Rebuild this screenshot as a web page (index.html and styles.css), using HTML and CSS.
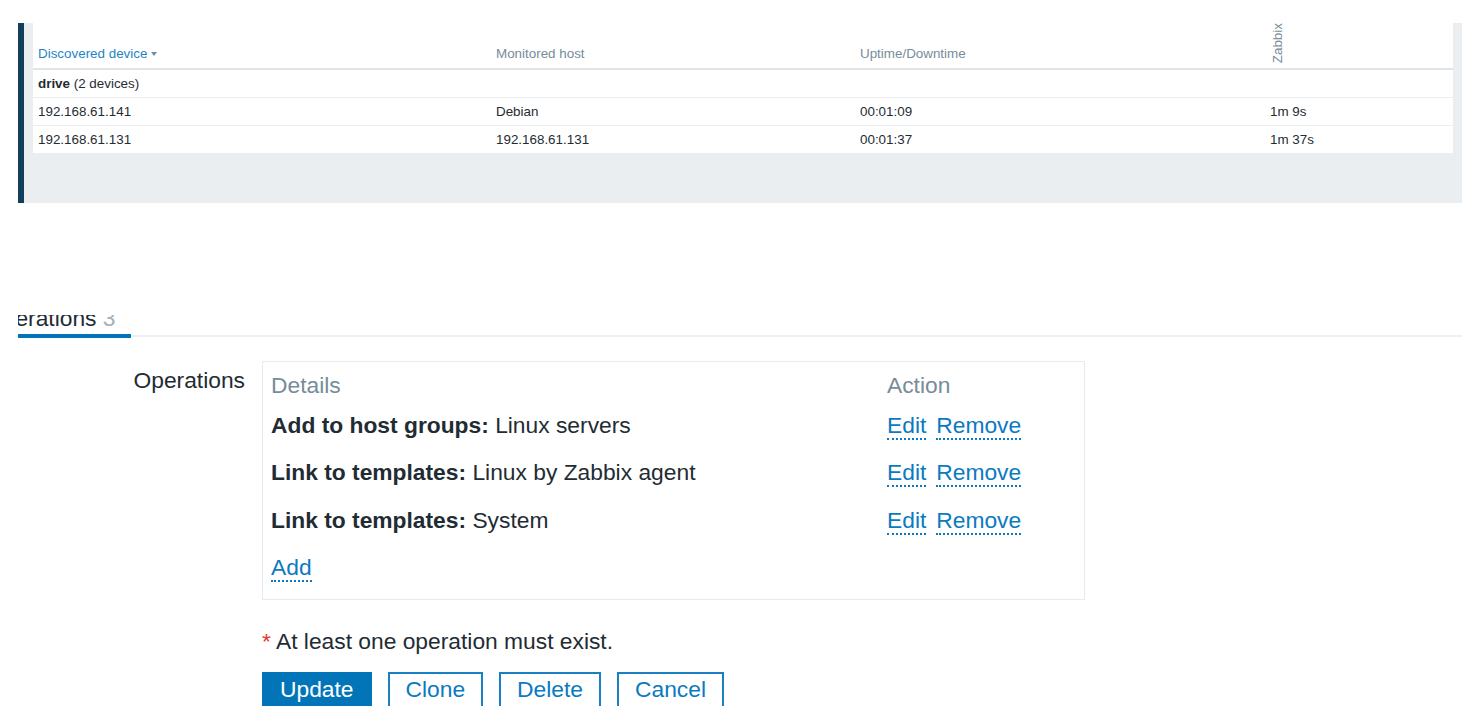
FILE: index.html
```html
<!DOCTYPE html>
<html lang="en">
<head>
<meta charset="utf-8">
<title>Discovery</title>
<link rel="stylesheet" href="styles.css">
</head>
<body>
<section class="panel">
  <table class="disc">
    <colgroup><col class="c1"><col class="c2"><col class="c3"><col class="c4"></colgroup>
    <thead>
      <tr>
        <th><a class="sort">Discovered device</a><span class="arrow"></span></th>
        <th>Monitored host</th>
        <th>Uptime/Downtime</th>
        <th><span class="vert">Zabbix</span></th>
      </tr>
    </thead>
    <tbody>
      <tr><td colspan="4"><b>drive</b> (2 devices)</td></tr>
      <tr><td>192.168.61.141</td><td>Debian</td><td>00:01:09</td><td>1m 9s</td></tr>
      <tr><td>192.168.61.131</td><td>192.168.61.131</td><td>00:01:37</td><td>1m 37s</td></tr>
    </tbody>
  </table>
</section>

<section class="lower">
  <div class="tabs">
    <div class="tab">Operations <span class="count">3</span></div>
  </div>
  <div class="form">
    <div class="flabel">Operations</div>
    <div class="opbox">
      <div class="optable">
        <div class="h">Details</div>
        <div class="h">Action</div>
        <div class="c"><b>Add to host groups:</b> Linux servers</div>
        <div class="c"><a class="lnk">Edit</a><a class="lnk ml">Remove</a></div>
        <div class="c"><b>Link to templates:</b> Linux by Zabbix agent</div>
        <div class="c"><a class="lnk">Edit</a><a class="lnk ml">Remove</a></div>
        <div class="c"><b>Link to templates:</b> System</div>
        <div class="c"><a class="lnk">Edit</a><a class="lnk ml">Remove</a></div>
        <div class="c"><a class="lnk">Add</a></div>
        <div class="c"></div>
      </div>
    </div>
    <div class="note"><span class="req">*</span> At least one operation must exist.</div>
    <div class="buttons">
      <button class="btn primary">Update</button>
      <button class="btn">Clone</button>
      <button class="btn">Delete</button>
      <button class="btn">Cancel</button>
    </div>
  </div>
</section>
</body>
</html>
```
FILE: styles.css
```css
* { box-sizing: border-box; }
body {
  margin: 0;
  background: #fff;
  font-family: "Liberation Sans", Arial, sans-serif;
  color: #1f2c33;
}

/* ---------- top panel ---------- */
.panel {
  margin: 23px 0 0 18px;
  width: 1444px;
  height: 180px;
  background: #ebeef0;
  border-left: 6px solid #123f5c;
  padding: 0 9px;
}
.disc {
  width: 1420px;
  table-layout: fixed;
  border-collapse: separate;
  border-spacing: 0;
  background: #fff;
  font-size: 13.4px;
  line-height: 15px;
}
.c1 { width: 458px; }
.c2 { width: 364px; }
.c3 { width: 410px; }
.c4 { width: 188px; }
.disc th {
  height: 47px;
  padding: 0 5px 7px;
  vertical-align: bottom;
  text-align: left;
  font-weight: normal;
  color: #768d99;
  border-bottom: 2px solid #dfe4e7;
}
.disc td {
  height: 28px;
  padding: 0 5px;
  vertical-align: middle;
  border-bottom: 1px solid #ebeef0;
  color: #1f2c33;
}
.sort { color: #1f84c6; }
.arrow {
  display: inline-block;
  margin-left: 4px;
  vertical-align: middle;
  border-left: 3.5px solid transparent;
  border-right: 3.5px solid transparent;
  border-top: 4px solid #768d99;
}
.vert {
  display: inline-block;
  writing-mode: vertical-rl;
  transform: rotate(180deg);
  vertical-align: bottom;
  margin: -6px 0 -2px;
}

/* ---------- lower form ---------- */
.lower {
  margin: 112px 0 0 18px;
  width: 1444px;
  height: 391px;
  overflow: hidden;
  font-size: 22.8px;
}
.tabs {
  display: flex;
  margin-top: -12px;
  border-bottom: 2px solid #eff0f1;
}
.tab {
  margin-left: -48px;
  margin-bottom: -3px;
  padding: 0 15px 1px;
  line-height: 30px;
  border-bottom: 4px solid #0275b8;
  color: #1f2c33;
  white-space: nowrap;
}
.count { color: #a3b0b8; }

.form {
  display: grid;
  grid-template-columns: 227px 823px;
  column-gap: 17px;
  margin-top: 24px;
}
.flabel {
  text-align: right;
  padding-top: 7px;
  line-height: 25.5px;
}
.opbox {
  border: 1px solid #e8ebed;
  padding: 0 8px 7.5px;
}
.optable {
  display: grid;
  grid-template-columns: 616px 1fr;
}
.h {
  padding: 10.45px 0 2.4px;
  line-height: 26.6px;
  color: #768d99;
}
.c {
  padding: 10.45px 0;
  line-height: 26.6px;
  height: 47.5px;
  white-space: nowrap;
}
.lnk {
  color: #0b7ac0;
  text-decoration: none;
  border-bottom: 2px dotted #0b7ac0;
  cursor: pointer;
}
.ml { margin-left: 10px; }

.note {
  grid-column: 2;
  margin-top: 29px;
  line-height: 25.5px;
}
.req { color: #e33734; }

.buttons {
  grid-column: 2;
  display: flex;
  gap: 16px;
  margin-top: 17.5px;
}
.btn {
  font: inherit;
  line-height: 25.5px;
  padding: 3px 16px 13px;
  border: 2px solid #1a80c4;
  background: #fff;
  color: #0b7ac0;
  border-radius: 0;
}
.btn.primary {
  background: #0275b8;
  border-color: #0275b8;
  color: #fff;
}
```
